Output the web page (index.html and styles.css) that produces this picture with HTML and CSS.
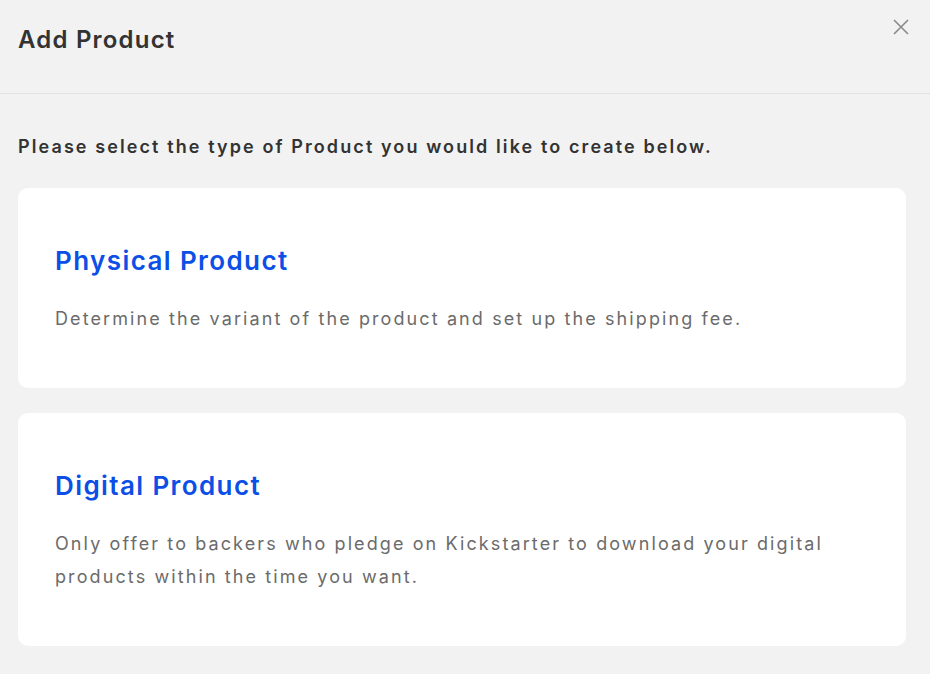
FILE: index.html
```html
<!DOCTYPE html>
<html lang="en">
    <head>
        <meta charset="UTF-8" />
        <meta name="viewport" content="width=device-width, initial-scale=1.0" />
        <title>Add Product</title>
        <link rel="stylesheet" href="styles.css">
    </head>
    <body>
        <div class="modal">
            <div class="modal-header">
                <h2 class="modal-title">Add Product</h2>
                <button class="close-btn" aria-label="Close">
                    <svg width="18" height="18" viewBox="0 0 18 18">
                        <path d="M2 2 L16 16 M16 2 L2 16" stroke="#8a8a8a" stroke-width="1.6" fill="none" />
                    </svg>
                </button>
            </div>
            <div class="modal-body">
                <p class="intro">Please select the type of Product you would like to create below.</p>
                <div class="option-card">
                    <h3 class="option-title">Physical Product</h3>
                    <p class="option-desc">Determine the variant of the product and set up the shipping fee.</p>
                </div>
                <div class="option-card">
                    <h3 class="option-title">Digital Product</h3>
                    <p class="option-desc">Only offer to backers who pledge on Kickstarter to download your digital products within the time you want.</p>
                </div>
            </div>
        </div>
    </body>
</html>
```

FILE: styles.css
```css
body {
    font-family: Inter, "Open Sans", sans-serif;
    margin: 0;
    padding: 0;
    background-color: #f2f2f2;
    color: #333;
}
.modal {
    width: 930px;
}
.modal-header {
    display: flex;
    justify-content: space-between;
    align-items: flex-start;
    height: 94px;
    box-sizing: border-box;
    padding: 25px 20px 0 18px;
    border-bottom: 1px solid #e3e3e3;
}
.modal-title {
    margin: 0;
    font-size: 24px;
    font-weight: 600;
    line-height: 30px;
    letter-spacing: 1.2px;
    color: #333;
}
.close-btn {
    background: none;
    border: none;
    padding: 0;
    margin-top: -7px;
    cursor: pointer;
}
.modal-body {
    padding: 0 24px 0 18px;
}
.intro {
    margin: 40px 0 28px;
    font-size: 18px;
    font-weight: 600;
    line-height: 26px;
    letter-spacing: 2.1px;
    color: #333;
}
.option-card {
    background-color: #fff;
    border-radius: 10px;
    padding: 56px 37px 53px;
    margin-bottom: 25px;
}
.option-title {
    margin: 0 0 24px;
    font-size: 26px;
    font-weight: 600;
    line-height: 34px;
    letter-spacing: 1.4px;
    color: #0b4fe6;
}
.option-desc {
    margin: 0;
    font-size: 18px;
    line-height: 33px;
    letter-spacing: 2.1px;
    color: #6b6b6b;
}
```
